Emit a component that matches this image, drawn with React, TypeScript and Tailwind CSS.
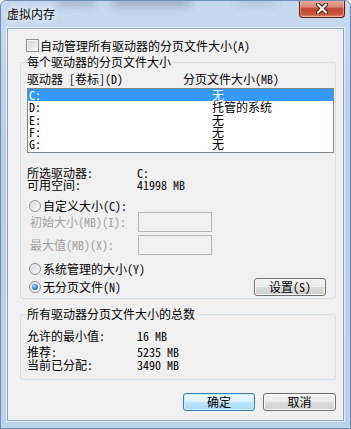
import React from 'react';

const Checkbox: React.FC = () => (
  <span className="w-[13px] h-[13px] shrink-0 border border-[#8e8f8f] bg-[linear-gradient(135deg,#cdd1d6,#f7f7f7)] shadow-[inset_0_0_0_1px_#f4f4f4]" />
);

const Radio: React.FC<{ checked?: boolean }> = ({ checked }) => (
  <span className="w-[12px] h-[12px] shrink-0 rounded-full border border-[#8e8f8f] bg-[linear-gradient(135deg,#d4d6d9,#fbfbfb)] shadow-[inset_0_0_0_1px_#f2f2f2] flex items-center justify-center">
    {checked && (
      <span className="w-[6px] h-[6px] rounded-full bg-[radial-gradient(circle_at_40%_35%,#a6d8fb,#2f7dc0_60%,#1d4f7f)]" />
    )}
  </span>
);

const WinButton: React.FC<{ children: React.ReactNode; primary?: boolean; className?: string }> = ({
  children,
  primary,
  className,
}) => (
  <button
    type="button"
    className={`h-[18px] rounded-[3px] border flex items-center justify-center text-[12px] leading-[12px] text-black ${
      primary
        ? 'border-[#3c7fb1] bg-[linear-gradient(#eaf6fd,#d9f0fc_50%,#bee6fd_50%,#a7d9f5)] shadow-[inset_0_0_0_1px_#c7ecfd]'
        : 'border-[#707070] bg-[linear-gradient(#f2f2f2,#ebebeb_50%,#dddddd_50%,#cfcfcf)] shadow-[inset_0_0_0_1px_#fbfbfb]'
    } ${className || ''}`}
  >
    {children}
  </button>
);

const drives = [
  { d: 'C:', v: '无' },
  { d: 'D:', v: '托管的系统' },
  { d: 'E:', v: '无' },
  { d: 'F:', v: '无' },
  { d: 'G:', v: '无' },
];

const App: React.FC = () => {
  return (
    <div className="w-[351px] h-[429px] relative overflow-hidden border border-[#6f8db3] rounded-t-[6px] bg-[linear-gradient(180deg,#c6d9ef,#b9d0ea_35%,#bdd3eb)] flex flex-col text-[12px] leading-[12px] text-black font-['Noto_Sans_Mono_CJK_SC','Noto_Sans_CJK_SC',sans-serif]">
      {/* glass blur bits */}
      <div className="absolute left-[55px] top-[-6px] w-[40px] h-[10px] rounded-full bg-[#8593a6] opacity-60 blur-[5px]" />
      <div className="absolute left-[110px] top-[-6px] w-[80px] h-[11px] rounded-full bg-[#7d8ba0] opacity-60 blur-[5px]" />
      <div className="absolute left-[235px] top-[-5px] w-[40px] h-[8px] rounded-full bg-[#9aa7b8] opacity-50 blur-[5px]" />

      {/* title bar */}
      <div className="h-[27px] relative flex items-start">
        <span className="ml-[6px] mt-[7px] text-[12px] leading-[12px] font-['Noto_Sans_CJK_SC',sans-serif] [text-shadow:0_0_5px_#fff,0_0_8px_#fff]">
          虚拟内存
        </span>
        <div className="absolute top-[-1px] right-[5px] w-[46px] h-[18px] rounded-b-[4px] border border-[#5a1e14] border-t-0 bg-[linear-gradient(#eab0a2,#d98573_40%,#c4442f_52%,#c95a3d_85%,#e09a7a)] shadow-[inset_0_0_0_1px_rgba(255,220,200,0.45)] flex items-center justify-center">
          <svg width="12" height="11" viewBox="0 0 12 11">
            <path d="M2 1.5 L10 9.5 M10 1.5 L2 9.5" stroke="#4a1a12" strokeWidth="4" strokeLinecap="round" />
            <path d="M2 1.5 L10 9.5 M10 1.5 L2 9.5" stroke="#ffffff" strokeWidth="2.2" strokeLinecap="round" />
          </svg>
        </div>
      </div>

      {/* client area */}
      <div className="ml-[6px] w-[337px] h-[393px] border border-[#8ba3c1] bg-[#f0f0f0] shadow-[0_0_0_1px_rgba(255,255,255,0.6)] flex flex-col pl-[12px] pr-[7px]">
        <div className="mt-[10px] ml-[6px] flex items-center">
          <Checkbox />
          <span className="ml-[1px]">自动管理所有驱动器的分页文件大小(A)</span>
        </div>

        <fieldset className="mt-[4px] border border-[#d5dfe5] rounded-[3px] px-[6px] pb-[2px]">
          <legend className="pr-[2px] leading-[12px]">每个驱动器的分页文件大小</legend>
          <div className="mt-[5px] flex">
            <span className="w-[156px]">驱动器 [卷标](D)</span>
            <span>分页文件大小(MB)</span>
          </div>
          <div className="mt-[3px] h-[65px] -mr-[5px] border border-[#828790] bg-white">
            {drives.map((r, i) => (
              <div
                key={r.d}
                className={`h-[12.25px] flex items-center pl-[1px] ${i === 0 ? 'bg-[#3399ff] text-white' : ''}`}
              >
                <span className="w-[183px]">{r.d}</span>
                <span>{r.v}</span>
              </div>
            ))}
          </div>

          <div className="mt-[14px] flex">
            <span className="w-[110px]">所选驱动器:</span>
            <span>C:</span>
          </div>
          <div className="flex">
            <span className="w-[110px]">可用空间:</span>
            <span>41998 MB</span>
          </div>

          <div className="mt-[9px] ml-[2px] flex items-center">
            <Radio />
            <span className="ml-[2px]">自定义大小(C):</span>
          </div>
          <div className="flex items-center text-[#a0a0a0]">
            <span className="w-[111px] pl-[3px]">初始大小(MB)(I):</span>
            <span className="w-[74px] h-[20px] border border-[#b5b5b5] bg-[#f0f0f0]" />
          </div>
          <div className="mt-[3px] flex items-center text-[#a0a0a0]">
            <span className="w-[111px] pl-[3px]">最大值(MB)(X):</span>
            <span className="w-[74px] h-[20px] border border-[#b5b5b5] bg-[#f0f0f0]" />
          </div>

          <div className="mt-[8px] ml-[2px] flex items-center">
            <Radio />
            <span className="ml-[2px]">系统管理的大小(Y)</span>
          </div>
          <div className="mt-[3px] h-[18px] flex items-center justify-between">
            <div className="ml-[2px] flex items-center">
              <Radio checked />
              <span className="ml-[2px]">无分页文件(N)</span>
            </div>
            <WinButton className="w-[72px] mr-[3px]">设置(S)</WinButton>
          </div>
        </fieldset>

        <fieldset className="mt-[9px] border border-[#d5dfe5] rounded-[3px] px-[6px] pb-[8px]">
          <legend className="pr-[2px] leading-[12px]">所有驱动器分页文件大小的总数</legend>
          <div className="mt-[10px] flex">
            <span className="w-[110px]">允许的最小值:</span>
            <span>16 MB</span>
          </div>
          <div className="mt-[4px] flex">
            <span className="w-[110px]">推荐:</span>
            <span>5235 MB</span>
          </div>
          <div className="mt-[1px] flex">
            <span className="w-[110px]">当前已分配:</span>
            <span>3490 MB</span>
          </div>
        </fieldset>

        <div className="mt-[13px] flex justify-end gap-[8px]">
          <WinButton primary className="w-[72px]">确定</WinButton>
          <WinButton className="w-[73px]">取消</WinButton>
        </div>
      </div>
    </div>
  );
};

export default App;
